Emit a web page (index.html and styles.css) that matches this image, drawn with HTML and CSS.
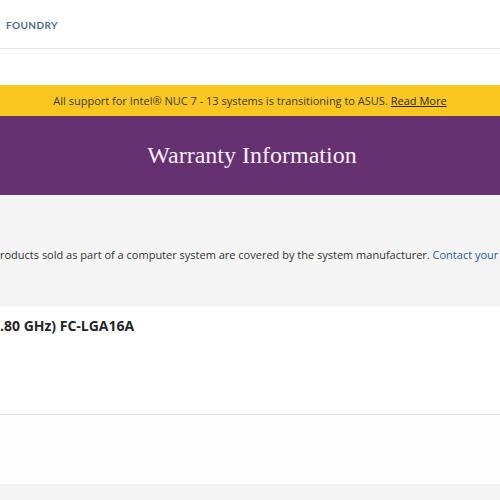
FILE: index.html
```html
<!DOCTYPE html>
<html>
<head>
<meta charset="utf-8">
<link rel="stylesheet" href="styles.css">
</head>
<body>
<header class="topbar"><span class="brand">FOUNDRY</span></header>
<div class="spacer"></div>
<div class="notice">All support for Intel® NUC 7 - 13 systems is transitioning to ASUS. <a class="notice-link" href="#">Read More</a></div>
<section class="hero"><h1 class="hero-title">Warranty Information</h1></section>
<section class="intro"><p class="intro-text">roducts sold as part of a computer system are covered by the system manufacturer. <a class="intro-link" href="#">Contact your</a></p></section>
<section class="product"><h2 class="product-title">.80 GHz) FC-LGA16A</h2></section>
<section class="lower"></section>
<section class="footer-band"></section>
</body>
</html>
```
FILE: styles.css
```css
html, body { margin: 0; padding: 0; }
body { font-family: "Open Sans", "Noto Sans", sans-serif; color: #262626; background: #fff; width: 500px; overflow: hidden; }
.topbar { height: 48px; border-bottom: 1px solid #e6e6e6; display: flex; align-items: center; padding-left: 6px; }
.brand { font-family: "Lato", sans-serif; font-size: 10px; font-weight: 700; letter-spacing: 0.4px; color: #4b6d8f; padding-top: 1px; }
.spacer { height: 36px; }
.notice { height: 31px; background: #f9c720; display: flex; align-items: center; justify-content: center; font-size: 11px; color: #3a3a3a; white-space: nowrap; }
.notice-link { color: #2b2b2b; text-decoration: underline; margin-left: 3px; }
.hero { height: 79px; background: #653171; display: flex; align-items: center; justify-content: center; }
.hero-title { margin: 0; font-family: "Liberation Serif", serif; font-weight: 400; font-size: 24px; color: #fbeefb; padding-left: 4px; }
.intro { height: 111px; background: #f4f4f4; display: flex; align-items: center; overflow: hidden; }
.intro-text { margin: 8px 0 0 0; font-size: 11px; white-space: nowrap; color: #333; }
.intro-link { color: #1f5c99; text-decoration: none; }
.product { height: 108px; border-bottom: 1px solid #e4e4e4; box-shadow: 0 2px 3px rgba(0,0,0,0.04); overflow: hidden; }
.product-title { margin: 10px 0 0 0; font-size: 14px; font-weight: 700; white-space: nowrap; color: #262626; }
.lower { height: 69px; background: #fdfdfd; }
.footer-band { height: 20px; background: #f4f4f4; }
```
